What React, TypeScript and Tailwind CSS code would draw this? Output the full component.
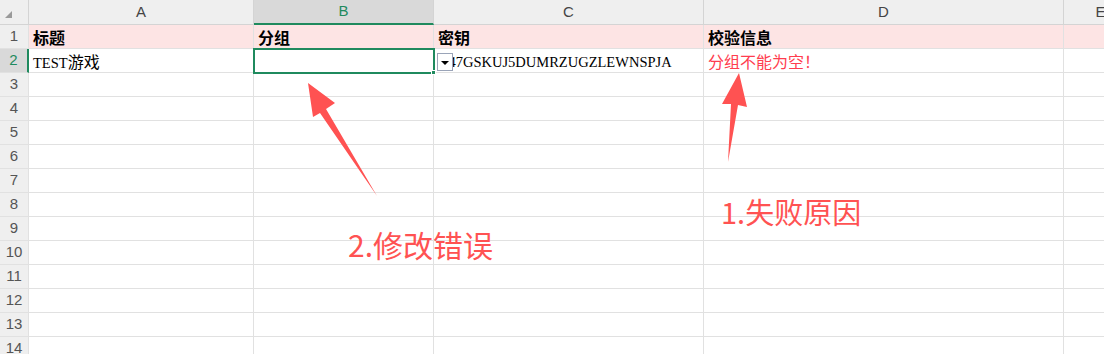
import React from "react";

const cols = [
  { key: "A", width: 225 },
  { key: "B", width: 180 },
  { key: "C", width: 270 },
  { key: "D", width: 360 },
  { key: "E", width: 74 },
];

const rowNums = Array.from({ length: 14 }, (_, i) => i + 1);

// latin glyphs come out a little narrower than the CJK ones in the sheet
const Han = ({ children }: { children: React.ReactNode }) => (
  <span className="text-[16px] font-['Noto_Sans_CJK_SC',sans-serif]">{children}</span>
);

const cellText: Record<number, React.ReactNode[]> = {
  1: [<Han>标题</Han>, <Han>分组</Han>, <Han>密钥</Han>, <Han>校验信息</Han>, null],
  2: [
    <>
      TEST<Han>游戏</Han>
    </>,
    null,
    "K47GSKUJ5DUMRZUGZLEWNSPJA",
    <Han>分组不能为空！</Han>,
    null,
  ],
};

function Arrow({ d }: { d: string }) {
  return <path d={d} fill="#ff5252" />;
}

export default function App() {
  return (
    <div className="relative w-[1104px] h-[354px] overflow-hidden bg-white">
      {/* column header strip */}
      <div className="flex h-[25px] bg-[#efefef] border-b border-[#d4d4d4]">
        <div className="w-[29px] shrink-0 border-r border-[#d4d4d4] relative">
          <div className="absolute left-[5px] top-[11px] w-0 h-0 border-l-[7px] border-l-transparent border-b-[7px] border-b-[#9a9a9a]" />
        </div>
        {cols.map((c) => (
          <div
            key={c.key}
            style={{ width: c.width }}
            className={
              "shrink-0 border-r border-[#d4d4d4] flex items-center justify-center text-[15px] font-['Liberation_Sans',sans-serif] " +
              (c.key === "B"
                ? "bg-[#d9d9d9] text-[#1f8a5e] border-b-2 border-b-[#1f8a5e] -mb-px"
                : "text-[#444]")
            }
          >
            {c.key}
          </div>
        ))}
      </div>

      {/* rows */}
      {rowNums.map((n) => (
        <div key={n} className={"flex h-[24px] " + (n === 1 ? "bg-[#fde4e4]" : "")}>
          <div
            className={
              "w-[29px] shrink-0 flex items-center justify-center text-[15px] font-['Liberation_Sans',sans-serif] border-b border-[#e1e1e1] " +
              (n === 2
                ? "bg-[#d9d9d9] text-[#1f8a5e] border-r-2 border-r-[#1f8a5e]"
                : "bg-[#efefef] text-[#555] border-r border-[#d4d4d4]")
            }
          >
            {n}
          </div>
          {cols.map((c, ci) => (
            <div
              key={c.key}
              style={{ width: c.width }}
              className={
                "shrink-0 border-r border-b border-[#e1e1e1] px-[4px] flex items-center pt-[2px] text-[14.5px] leading-[20px] whitespace-nowrap font-['Liberation_Serif',serif] " +
                (n === 1 ? "font-bold text-black" : "") +
                (n === 2 && c.key === "D" ? "text-[#ff3d4f]" : "") +
                (n === 2 && c.key !== "D" ? "text-black" : "")
              }
            >
              <span>{cellText[n]?.[ci] ?? null}</span>
            </div>
          ))}
        </div>
      ))}

      {/* active cell B2 */}
      <div className="absolute left-[253px] top-[48px] w-[182px] h-[26px] border-2 border-[#1f8a5e]" />
      <div className="absolute left-[431px] top-[70px] w-[5px] h-[5px] bg-[#1f8a5e] border border-white" />

      {/* list dropdown button */}
      <div className="absolute left-[437px] top-[53px] w-[16px] h-[18px] bg-white border border-[#9aa4b8] flex items-center justify-center">
        <div className="w-0 h-0 border-l-[4px] border-l-transparent border-r-[4px] border-r-transparent border-t-[4px] border-t-black mt-[2px]" />
      </div>

      {/* callouts */}
      <svg className="absolute inset-0 pointer-events-none" width="1104" height="354">
        <Arrow d="M308 83 L335 103 L326 109 L377 196 L320 113 L313 117 Z" />
        <Arrow d="M739 73 L747 107 L738 105 L728 162 L731 104 L722 104 Z" />
      </svg>
      <div className="absolute left-[348px] top-[225px] text-[30px] leading-[38px] text-[#ff5252] font-['Noto_Sans_CJK_SC',sans-serif]">
        2.修改错误
      </div>
      <div className="absolute left-[721px] top-[193px] text-[29px] leading-[36px] text-[#ff5252] font-['Noto_Sans_CJK_SC',sans-serif]">
        1.失败原因
      </div>
    </div>
  );
}
